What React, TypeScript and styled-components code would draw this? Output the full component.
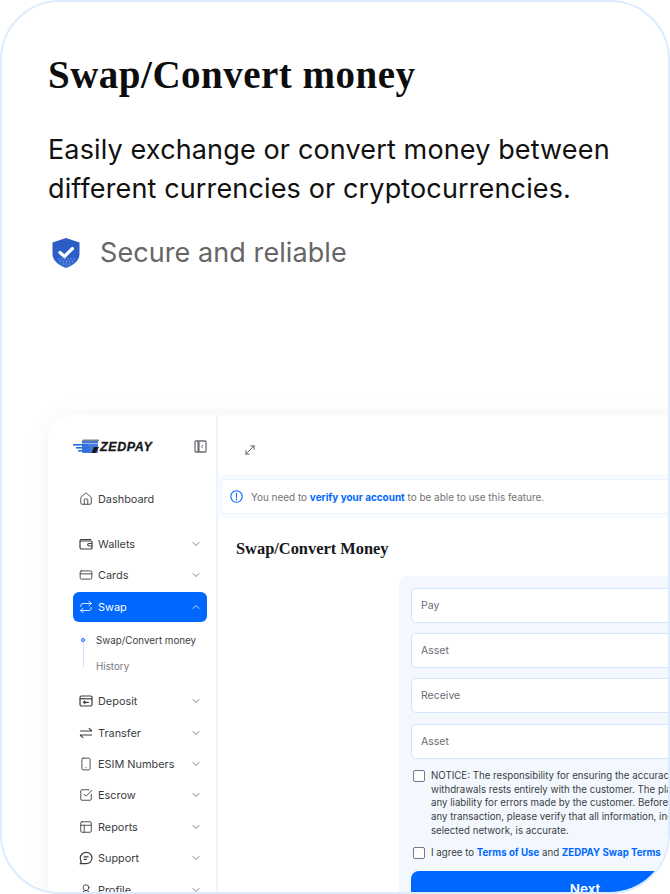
import React from 'react'
import styled, { createGlobalStyle } from 'styled-components'
import {
    ChevronDown,
    ChevronUp,
    CreditCard,
    House,
    MoveDiagonal,
    PanelsTopLeft,
    Repeat,
    Smartphone,
    SquareCheckBig,
    UserRound,
} from 'lucide-react'

const sans = `"Inter", "Liberation Sans", sans-serif`
const serif = `"Liberation Serif", "DejaVu Serif", serif`

const GlobalStyle = createGlobalStyle`
    html, body {
        margin: 0;
        padding: 0;
        background: #fff;
    }
    * {
        box-sizing: border-box;
    }
`

const Frame = styled.div`
    width: 670px;
    height: 894px;
    border: 2px solid #dcebfd;
    border-radius: 60px;
    background: #fff;
    overflow: hidden;
    display: flex;
    flex-direction: column;
    font-family: ${sans};
`
const Intro = styled.header`
    height: 413px;
    flex-shrink: 0;
    padding: 50px 0 0 46px;
`
const Title = styled.h1`
    margin: 0 0 32px;
    font-family: ${serif};
    font-size: 39px;
    line-height: 46px;
    font-weight: 700;
    letter-spacing: 0.5px;
    color: #0d0d0d;
`
const Lead = styled.p`
    margin: 0;
    font-size: 27px;
    line-height: 39px;
    letter-spacing: 0.14px;
    color: #111;
`
const Badge = styled.div`
    display: flex;
    align-items: center;
    gap: 19px;
    margin-top: 26px;
    padding-left: 3px;
    font-size: 27px;
    line-height: 38px;
    letter-spacing: 0.08px;
    color: #666;
`
const Mock = styled.section`
    width: 800px;
    height: 520px;
    margin-left: 46px;
    flex-shrink: 0;
    display: flex;
    border-radius: 24px 0 0 0;
    background: #fff;
    box-shadow: 0 0 26px rgba(0, 0, 0, 0.05);
`
const Sidebar = styled.aside`
    width: 170px;
    flex-shrink: 0;
    padding: 0 9px 0 25px;
    border-right: 2px solid #eef5fe;
`
const Brand = styled.div`
    height: 69px;
    padding: 0 0 6px 0;
    display: flex;
    align-items: center;
    justify-content: space-between;
`
const LogoWrap = styled.div`
    display: flex;
    align-items: center;
    margin-top: 1px;
`
const LogoText = styled.span`
    font-family: "Liberation Sans", sans-serif;
    font-size: 12.5px;
    font-weight: 700;
    font-style: italic;
    letter-spacing: 0.6px;
    color: #15171c;
    -webkit-text-stroke: 0.3px #15171c;
`
const NavList = styled.nav`
    display: flex;
    flex-direction: column;
`
const NavRow = styled.div<{ $active?: boolean; $gap?: number }>`
    height: 30px;
    flex-shrink: 0;
    display: flex;
    align-items: center;
    gap: 5px;
    padding: 0 5px 0 6px;
    margin-bottom: ${p => p.$gap ?? 1.4}px;
    border-radius: 6px;
    font-size: 10.9px;
    color: ${p => (p.$active ? '#fff' : '#3b3d42')};
    background: ${p => (p.$active ? '#0068ff' : 'transparent')};
    svg {
        flex-shrink: 0;
    }
`
const NavLabel = styled.span`
    flex: 1;
`
const SubMenu = styled.div`
    position: relative;
    padding: 0 0 0 23px;
    margin: 4px 0 6px;
`
const SubItem = styled.div<{ $muted?: boolean }>`
    height: 26.5px;
    display: flex;
    align-items: center;
    font-size: 9.8px;
    color: ${p => (p.$muted ? '#77797e' : '#3b3d42')};
`
const Rail = styled.div`
    position: absolute;
    left: 9.5px;
    top: 13px;
    width: 1px;
    height: 27px;
    background: #cfe3fd;
`
const RailDot = styled.div`
    position: absolute;
    left: 8px;
    top: 11px;
    width: 4px;
    height: 4px;
    border-radius: 50%;
    border: 1px solid #0068ff;
    background: #dcebfd;
`
const Content = styled.main`
    flex: 1;
    display: flex;
    flex-direction: column;
    background: #f8fbff;
`
const TopBar = styled.div`
    height: 59px;
    flex-shrink: 0;
    display: flex;
    align-items: center;
    padding: 11px 0 0 25px;
    background: #fff;
    color: #44464b;
`
const Alert = styled.div`
    height: 35px;
    flex-shrink: 0;
    margin: 5px 0 4px 3px;
    display: flex;
    align-items: center;
    gap: 8px;
    padding-left: 8px;
    background: #fff;
    border: 1px solid #eaf3fe;
    border-radius: 3px;
    font-size: 9.95px;
    color: #707277;
`
const StrongLink = styled.a`
    font-weight: 700;
    color: #0068ff;
`
const Page = styled.div`
    flex: 1;
    background: #fff;
    padding: 21px 0 0 18px;
`
const PageTitle = styled.h2`
    margin: 0 0 17px;
    font-family: ${serif};
    font-size: 16.4px;
    line-height: 20px;
    font-weight: 700;
    color: #17181b;
`
const FormPanel = styled.div`
    margin-left: 163px;
    padding: 12px;
    background: #f3f8fe;
    border-radius: 8px 0 0 0;
    display: flex;
    flex-direction: column;
`
const Field = styled.div`
    height: 35px;
    flex-shrink: 0;
    margin-bottom: 10.2px;
    display: flex;
    align-items: center;
    padding-left: 9px;
    background: #fff;
    border: 1px solid #d5e6fc;
    border-radius: 5px;
    font-size: 10.5px;
    color: #6a6c72;
`
const CheckRow = styled.div<{ $gap: number }>`
    display: flex;
    align-items: flex-start;
    gap: 6px;
    padding-left: 2px;
    margin-bottom: ${p => p.$gap}px;
    font-size: 9.7px;
    line-height: 13.8px;
    color: #3b3d42;
    white-space: nowrap;
`
const Box = styled.span`
    width: 12px;
    height: 12px;
    flex-shrink: 0;
    margin-top: 1px;
    background: #fff;
    border: 1.3px solid #76787d;
    border-radius: 2px;
`
const NextButton = styled.button`
    width: 348px;
    padding: 10px 0;
    border: none;
    border-radius: 8px;
    background: #0068ff;
    color: #fff;
    font: inherit;
    font-size: 13.5px;
    line-height: 16px;
    font-weight: 600;
    text-align: center;
    display: block;
`

const shieldDots = [
    [8, 22], [11, 22], [14, 22], [17, 22], [20, 22], [23, 22],
    [9.5, 24.5], [12.5, 24.5], [15.5, 24.5], [18.5, 24.5], [21.5, 24.5],
    [12, 27], [15, 27], [18, 27],
]

const ShieldIcon = () => (
    <svg width="30" height="32" viewBox="0 0 30 32">
        <defs>
            <linearGradient id="shield" x1="0" y1="0" x2="0" y2="1">
                <stop offset="0" stopColor="#2a5cc2" />
                <stop offset="0.65" stopColor="#2c5fc8" />
                <stop offset="1" stopColor="#3a70d6" />
            </linearGradient>
        </defs>
        <path d="M15 1 L28.5 5.5 V17 C28.5 24 22 28.5 15 31 C8 28.5 1.5 24 1.5 17 V5.5 Z" fill="url(#shield)" />
        {shieldDots.map(([cx, cy]) => (
            <circle key={`${cx}-${cy}`} cx={cx} cy={cy} r="0.7" fill="#7fa6ec" />
        ))}
        <path d="M9 15.5 L13.4 19.5 L21.5 11.5" fill="none" stroke="#fff" strokeWidth="3.2" strokeLinecap="round" strokeLinejoin="round" />
    </svg>
)

const ZedpayMark = () => (
    <svg width="27" height="16" viewBox="0 0 27 16">
        <rect x="9" y="1" width="16" height="13" rx="1" fill="#3f78d8" />
        <rect x="10" y="0.5" width="16" height="1.6" fill="#7a8088" />
        <rect x="9" y="4" width="16" height="1.2" fill="#8fb4ee" />
        <path d="M21 8 L26 8 L22.5 14 L18.5 14 Z" fill="#15171c" />
        <rect x="0" y="5" width="15" height="1.6" fill="#2a6fe0" />
        <rect x="3" y="8" width="13" height="1.6" fill="#2a6fe0" />
        <rect x="5" y="11" width="11" height="1.6" fill="#2a6fe0" />
    </svg>
)

const CollapseIcon = () => (
    <svg width="13" height="13" viewBox="0 0 13 13" fill="none" stroke="#6b6d72" strokeWidth="1.3">
        <rect x="1" y="1" width="11" height="11" rx="1" />
        <path d="M4.5 1 V12" strokeWidth="2.2" />
        <path d="M9 4.8 L7.4 6.5 L9 8.2" strokeWidth="1" />
    </svg>
)

const WalletIcon = () => (
    <svg width="14" height="14" viewBox="0 0 14 14" fill="none" stroke="currentColor" strokeWidth="1.2">
        <path d="M12.2 2.5 H2.4 C1.6 2.5 1 3.1 1 3.9 V10.6 C1 11.4 1.6 12 2.4 12 H12 C12.6 12 13 11.6 13 11 V5 C13 4.4 12.6 4 12 4 H1.5" />
        <path d="M13 6.5 H10 C9.2 6.5 8.7 7.1 8.7 7.8 S9.2 9 10 9 H13" />
    </svg>
)

const DepositIcon = () => (
    <svg width="14" height="14" viewBox="0 0 14 14" fill="none" stroke="currentColor" strokeWidth="1.2">
        <rect x="1" y="2" width="12" height="10" rx="1.4" />
        <path d="M1 4.8 H13" />
        <path d="M9.8 8.3 H4.6 M6.2 6.8 L4.6 8.3 L6.2 9.8" />
    </svg>
)

const TransferIcon = () => (
    <svg width="14" height="14" viewBox="0 0 14 14" fill="none" stroke="currentColor" strokeWidth="1.1">
        <path d="M1 5 H13 M9.8 2.2 L13 5" />
        <path d="M13 9 H1 M4.2 11.8 L1 9" />
    </svg>
)

const SupportIcon = () => (
    <svg width="14" height="14" viewBox="0 0 14 14" fill="none" stroke="currentColor" strokeWidth="1.2">
        <path d="M7.2 1.3 C10.4 1.3 12.9 3.8 12.9 7 S10.4 12.7 7.2 12.7 H1.3 L2.2 10.4 C1.6 9.5 1.3 8.3 1.3 7 C1.3 3.8 4 1.3 7.2 1.3 Z" />
        <path d="M4.7 5.9 H9.5 M4.7 8.3 H7.8" />
    </svg>
)

const InfoIcon = () => (
    <svg width="13" height="13" viewBox="0 0 13 13" fill="none" stroke="#0068ff" strokeWidth="1.1">
        <circle cx="6.5" cy="6.5" r="5.7" />
        <path d="M6.5 3.4 V7.2 M6.5 8.8 V9.7" strokeLinecap="round" />
    </svg>
)

const menuTop = [
    { label: 'Wallets', icon: <WalletIcon /> },
    { label: 'Cards', icon: <CreditCard size={14} strokeWidth={1.5} /> },
]

const menuBottom = [
    { label: 'Deposit', icon: <DepositIcon /> },
    { label: 'Transfer', icon: <TransferIcon /> },
    { label: 'ESIM Numbers', icon: <Smartphone size={14} strokeWidth={1.5} /> },
    { label: 'Escrow', icon: <SquareCheckBig size={14} strokeWidth={1.5} /> },
    { label: 'Reports', icon: <PanelsTopLeft size={14} strokeWidth={1.5} /> },
    { label: 'Support', icon: <SupportIcon /> },
    { label: 'Profile', icon: <UserRound size={14} strokeWidth={1.5} /> },
]

const NavEntry = ({ label, icon }: { label: string; icon: React.ReactNode }) => (
    <NavRow>
        {icon}
        <NavLabel>{label}</NavLabel>
        <ChevronDown size={12} strokeWidth={1.5} color="#55575c" />
    </NavRow>
)

const App = () => {
    return (
        <Frame>
            <GlobalStyle />
            <Intro>
                <Title>Swap/Convert money</Title>
                <Lead>
                    Easily exchange or convert money between
                    <br />
                    different currencies or cryptocurrencies.
                </Lead>
                <Badge>
                    <ShieldIcon />
                    Secure and reliable
                </Badge>
            </Intro>

            <Mock>
                <Sidebar>
                    <Brand>
                        <LogoWrap>
                            <ZedpayMark />
                            <LogoText>ZEDPAY</LogoText>
                        </LogoWrap>
                        <CollapseIcon />
                    </Brand>
                    <NavList>
                        <NavRow $gap={15}>
                            <House size={14} strokeWidth={1.5} />
                            <NavLabel>Dashboard</NavLabel>
                        </NavRow>
                        {menuTop.map(item => (
                            <NavEntry key={item.label} {...item} />
                        ))}
                        <NavRow $active>
                            <Repeat size={14} strokeWidth={1.5} />
                            <NavLabel>Swap</NavLabel>
                            <ChevronUp size={12} strokeWidth={1.5} />
                        </NavRow>
                        <SubMenu>
                            <Rail />
                            <RailDot />
                            <SubItem>Swap/Convert money</SubItem>
                            <SubItem $muted>History</SubItem>
                        </SubMenu>
                        {menuBottom.map(item => (
                            <NavEntry key={item.label} {...item} />
                        ))}
                    </NavList>
                </Sidebar>

                <Content>
                    <TopBar>
                        <MoveDiagonal size={14} strokeWidth={1.4} />
                    </TopBar>
                    <Alert>
                        <InfoIcon />
                        <span>
                            You need to <StrongLink>verify your account</StrongLink> to be able to use this feature.
                        </span>
                    </Alert>
                    <Page>
                        <PageTitle>Swap/Convert Money</PageTitle>
                        <FormPanel>
                            <Field>Pay</Field>
                            <Field>Asset</Field>
                            <Field>Receive</Field>
                            <Field>Asset</Field>
                            <CheckRow $gap={8}>
                                <Box />
                                <span>
                                    NOTICE: The responsibility for ensuring the accuracy of
                                    <br />
                                    withdrawals rests entirely with the customer. The platform disclaims
                                    <br />
                                    any liability for errors made by the customer. Before initiating
                                    <br />
                                    any transaction, please verify that all information, including the
                                    <br />
                                    selected network, is accurate.
                                </span>
                            </CheckRow>
                            <CheckRow $gap={11}>
                                <Box />
                                <span>
                                    I agree to <StrongLink>Terms of Use</StrongLink> and{' '}
                                    <StrongLink>ZEDPAY Swap Terms</StrongLink>
                                </span>
                            </CheckRow>
                            <NextButton>Next</NextButton>
                        </FormPanel>
                    </Page>
                </Content>
            </Mock>
        </Frame>
    )
}

export default App
